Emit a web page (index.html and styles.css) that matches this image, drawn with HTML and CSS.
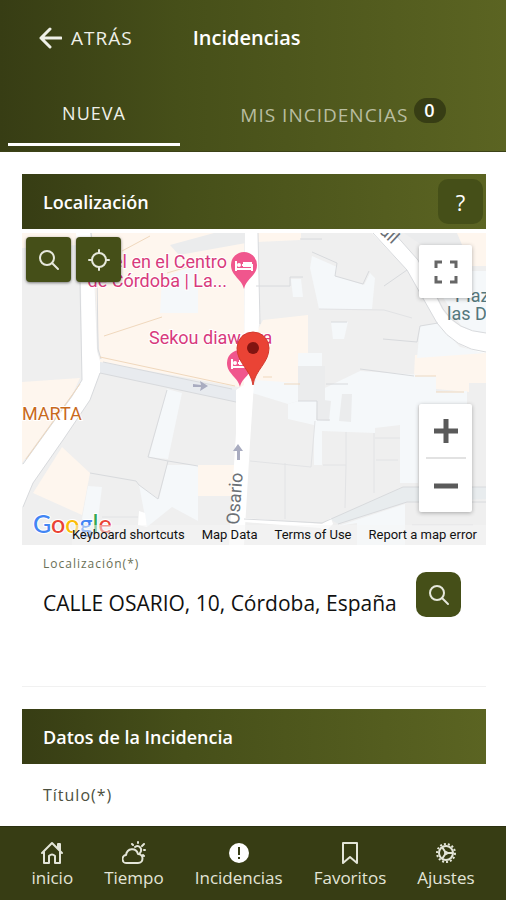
FILE: index.html
```html
<!DOCTYPE html>
<html lang="es">
<head>
    <meta charset="UTF-8">
    <meta name="viewport" content="width=device-width, initial-scale=1.0">
    <title>Incidencias</title>
    <link rel="stylesheet" href="styles.css">
</head>
<body>
    <header class="header">
        <div class="toolbar">
            <button class="back" type="button">
                <svg width="24" height="24" viewBox="0 0 24 24" fill="none" stroke="currentColor" stroke-width="3" stroke-linecap="round" stroke-linejoin="round"><path d="M12 3L3 12l9 9M3 12H23"/></svg>
                ATRÁS
            </button>
            <h1 class="title">Incidencias</h1>
        </div>
        <nav class="tabs">
            <button class="tab active" type="button">NUEVA</button>
            <button class="tab" type="button"><span class="tab-label">MIS INCIDENCIAS</span><span class="badge">0</span></button>
        </nav>
    </header>

    <main class="content">
        <section>
            <div class="section-head">
                <h2>Localización</h2>
                <button class="help" type="button">?</button>
            </div>

            <div class="map">
                <svg class="map-canvas" viewBox="0 0 464 312" preserveAspectRatio="xMidYMid slice">
                    <rect width="464" height="312" fill="#efefef"/>
                    <!-- manzanas -->
                    <g fill="#fef6ee">
                        <path d="M70 0H222V155L78 129Z"/>
                        <path d="M0 149L58 145 50 162 0 230Z"/>
                        <path d="M40 214L68 240 60 282 11 260Z"/>
                        <path d="M0 0H56V12L0 15Z"/>
                        <path d="M241 87L286 82V125L276 168 234 160V100Z"/>
                        <path d="M235 0H279V7L235 9Z"/>
                        <path d="M176 232H212V263H176Z"/>
                        <path d="M434 0H464V33H450Z"/>
                        <path d="M393 122L464 118V150H447V159L414 156 392 143Z"/>
                    </g>
                    <g fill="#f5f8fa">
                        <path d="M290 23L315 34 313 43 342 52 348 40 353 45 350 76H297L288 35Z"/>
                        <path d="M269 46H279L281 64H271Z"/>
                        <path d="M140 45L176 31V80H138Z"/>
                        <path d="M145 156L160 160 146 226 127 224Z"/>
                        <path d="M145 232H176V288L150 274 125 294 117 252 137 266Z"/>
                        <path d="M66 253L80 254 76 286H60Z"/>
                        <path d="M309 89H326L322 106H311Z"/>
                        <path d="M276 120H300V133H276Z"/>
                        <path d="M234 147L276 150V168L266 171 230 160Z"/>
                        <path d="M266 171L276 168 338 138 414 143V159L445 158V172H396V250H378V192L353 195V200L300 198V232H292V192L266 186Z"/>
                        <path d="M423 38H464V104L440 94 415 55Z"/>
                        <path d="M398 93L416 90 438 114 464 120 395 125Z"/>
                        <path d="M316 293L383 271V312H335V290Z"/>
                    </g>
                    <g fill="#ebeced">
                        <path d="M148 12L192 0H224V10L157 22Z"/>
                        <path d="M276 133H303V168H276Z"/>
                        <path d="M295 166L309 168 307 188 294 187Z"/>
                        <path d="M320 161H330L329 189 317 188Z"/>
                        <path d="M382 0H435L440 12H400Z"/>
                    </g>
                    <!-- calles -->
                    <path d="M78 129L214 157V169L78 140Z" fill="#e8ebef"/>
                    <path d="M316 291L308 286 381 254H464V266L385 269Z" fill="#e8ecee"/>
                    <g fill="#ffffff">
                        <path d="M54 0H68L72 40 75 118 78 128V140L68 167 41 207 11 250 1 274H0V232L50 164 60 147 59 50Z"/>
                        <path d="M223 0H236L238 80 233 135 231 165 228 210 222 312H207L214 200V157L222 152Z"/>
                        <path d="M350 0H372L396 27 420 76Q434 98 464 100V120Q433 116 415 90L385 37Z"/>
                        <path d="M222 285L300 291 309 285 311 291 303 299 298 295 222 289Z"/>
                        <path d="M117 278L123 280 125 294 116 292Z"/>
                    </g>
                    <g fill="none" stroke="#d8dadd" stroke-width="1">
                        <path d="M58 50L60 147 50 163 1 231M78 140L68 167 41 207 11 250 1 274"/>
                        <path d="M69 0L75 40 76 116 79 126M78 140L214 169M81 129L210 156"/>
                        <path d="M145 157L126 224 146 228 136 266 117 252 114 248 68 240M146 228L176 233"/>
                        <path d="M236 0L238 91M222 286L300 290 381 254H464M316 291L385 269H464"/>
                        <path d="M351 0L385 37 415 90Q433 116 464 119M372 0L396 27 421 76Q435 98 464 100"/>
                        <path d="M385 37L362 53M290 19L315 30 313 43 341 51 347 38"/>
                        <path d="M234 53H268V44H281M361 106L395 109 398 93 416 90"/>
                        <path d="M276 168H295V187H308M304 151H326M338 136L392 143M278 6H300M309 89H325"/>
                    </g>
                    <g fill="none" stroke="#e2e3e5" stroke-width="1">
                        <path d="M228 228L289 234 293 188M301 232H324V199M324 232L323 275M263 230V286M352 200V260"/>
                        <path d="M353 205H378M354 227H376M80 284H116M390 292H451M401 173V252M297 76L362 77 390 85"/>
                    </g>
                    <g fill="none" stroke="#f0d8bd" stroke-width="1">
                        <path d="M82 103L140 84M100 18L128 3M145 40L165 34M78 124L213 153M58 151L4 226M241 144H250M262 151H278M414 159H442M393 143H414"/>
                    </g>
                    <!-- sentido de circulación -->
                    <g fill="#a9acc0">
                        <path d="M171 151L179 152 178 148 186 153 178 158 179 154 171 154Z"/>
                        <path d="M215 227V218H211L216 211 221 218H218V227Z"/>
                    </g>
                    <g class="poi">
                        <text x="205" y="35" text-anchor="end">Hotel en el Centro</text>
                        <text x="205" y="54" text-anchor="end">de Córdoba | La...</text>
                        <text x="127" y="111">Sekou diawarra</text>
                    </g>
                    <text class="shop" x="0" y="187">MARTA</text>
                    <text class="street" transform="translate(217 292) rotate(-86)">Osario</text>
                    <text class="street" transform="translate(348 -9) rotate(43)">Call</text>
                    <text class="square" x="433" y="69">Plaza</text>
                    <text class="square" x="425" y="87">las Doblas</text>
                    <!-- alojamientos -->
                    <g id="bed">
                        <path d="M222 56C220 46 209 43 209 32A13 13 0 0 1 235 32C235 43 224 46 222 56Z" fill="#f0568d"/>
                        <path d="M214 28V38M214 36H230M230 38V32H220" fill="none" stroke="#fff" stroke-width="2"/>
                        <path d="M221 29H230V34H221Z" fill="#fff"/>
                        <circle cx="217" cy="32" r="2" fill="#fff"/>
                    </g>
                    <use href="#bed" x="-4" y="98"/>
                    <!-- marcador -->
                    <path d="M231 152C229 137 215 130 215 115A16 16 0 0 1 247 115C247 130 233 137 231 152Z" fill="#ea4335" stroke="#d33b2f" stroke-width="1"/>
                    <circle cx="231" cy="115" r="6" fill="#811411"/>
                    <text class="google" x="11" y="300"><tspan fill="#4285f4">G</tspan><tspan fill="#ea4335">o</tspan><tspan fill="#fbbc05">o</tspan><tspan fill="#4285f4">g</tspan><tspan fill="#34a853">l</tspan><tspan fill="#ea4335">e</tspan></text>
                </svg>
                <div class="map-tools">
                    <button class="icon-btn" type="button" aria-label="Buscar">
                        <svg width="24" height="24" viewBox="0 0 24 24" fill="none" stroke="currentColor" stroke-width="2" stroke-linecap="round"><circle cx="10" cy="10" r="7"/><path d="M15 15l6 6"/></svg>
                    </button>
                    <button class="icon-btn" type="button" aria-label="Mi ubicación">
                        <svg width="24" height="24" viewBox="0 0 24 24" fill="none" stroke="currentColor" stroke-width="2" stroke-linecap="round"><circle cx="12" cy="12" r="7"/><path d="M12 2v3M12 19v3M2 12h3M19 12h3"/></svg>
                    </button>
                </div>
                <button class="map-btn fullscreen" type="button" aria-label="Pantalla completa">
                    <svg width="24" height="24" viewBox="0 0 24 24" fill="none" stroke="#666" stroke-width="3"><path d="M2 8V2h6M16 2h6v6M22 16v6h-6M8 22H2v-6"/></svg>
                </button>
                <div class="zoom">
                    <button class="map-btn" type="button" aria-label="Acercar">
                        <svg width="24" height="24" viewBox="0 0 24 24" stroke="#5a5a5a" stroke-width="5"><path d="M0 12h24M12 0v24"/></svg>
                    </button>
                    <button class="map-btn" type="button" aria-label="Alejar">
                        <svg width="24" height="24" viewBox="0 0 24 24" stroke="#5a5a5a" stroke-width="5"><path d="M0 12h24"/></svg>
                    </button>
                </div>
                <div class="map-legal">
                    <a href="#">Keyboard shortcuts</a>
                    <a href="#">Map Data</a>
                    <a href="#">Terms of Use</a>
                    <a href="#">Report a map error</a>
                </div>
            </div>

            <div class="location">
                <div class="field">
                    <label for="location">Localización(*)</label>
                    <input type="text" id="location" value="CALLE OSARIO, 10, Córdoba, España">
                </div>
                <button class="icon-btn rounded" type="button" aria-label="Buscar dirección">
                    <svg width="24" height="24" viewBox="0 0 24 24" fill="none" stroke="currentColor" stroke-width="2" stroke-linecap="round"><circle cx="10" cy="10" r="7"/><path d="M15 15l6 6"/></svg>
                </button>
            </div>
        </section>

        <section>
            <div class="section-head">
                <h2>Datos de la Incidencia</h2>
            </div>
            <div class="row">
                <label for="subject">Título(*)</label>
                <input type="text" id="subject">
            </div>
        </section>
    </main>

    <nav class="bottom-nav">
        <a href="#">
            <svg width="24" height="24" viewBox="0 0 24 24" fill="none" stroke="currentColor" stroke-width="2" stroke-linecap="round" stroke-linejoin="round"><path d="M2 12L12 2l10 10"/><path d="M18 7V3h2v6z" fill="currentColor"/><path d="M4 11v11h5v-7q3-3 6 0v7h5V11"/></svg>
            <span>inicio</span>
        </a>
        <a href="#">
            <svg width="24" height="24" viewBox="0 0 24 24" fill="none" stroke="currentColor" stroke-width="2" stroke-linecap="round" stroke-linejoin="round"><path d="M5 22a4 4 0 0 1-1-8c1-7 10-8 12-1 6 0 6 9 0 9zM13 6c4-3 8 2 5 6M16 1v1M10 3l1 1M22 3l-2 2M22 9h1M21 14l1 1"/></svg>
            <span>Tiempo</span>
        </a>
        <a href="#">
            <svg width="24" height="24" viewBox="0 0 24 24"><circle cx="12" cy="12" r="10" fill="#fff"/><path d="M12 6v8M12 16v2" stroke="#373d14" stroke-width="2"/></svg>
            <span>Incidencias</span>
        </a>
        <a href="#">
            <svg width="24" height="24" viewBox="0 0 24 24" fill="none" stroke="currentColor" stroke-width="2" stroke-linejoin="round"><path d="M5 2h14v20l-7-6-7 6z"/></svg>
            <span>Favoritos</span>
        </a>
        <a href="#">
            <svg width="24" height="24" viewBox="0 0 24 24" fill="none" stroke="currentColor" stroke-width="2"><circle cx="12" cy="12" r="7"/><circle cx="12" cy="12" r="9" stroke-dasharray="2 2"/><circle cx="12" cy="12" r="2" fill="currentColor" stroke="none"/><path d="M12 12h7M12 12L8 6M12 12l-4 6"/></svg>
            <span>Ajustes</span>
        </a>
    </nav>
</body>
</html>
```

FILE: styles.css
```css
* {
    box-sizing: border-box;
}
body {
    margin: 0;
    height: 100vh;
    display: flex;
    flex-direction: column;
    font-family: "Open Sans", "Noto Sans", sans-serif;
    background: #fff;
    color: #111;
}
button, input {
    font: inherit;
    color: inherit;
    border: none;
    background: none;
    padding: 0;
    margin: 0;
}
button {
    cursor: pointer;
}
svg {
    display: block;
}
h1, h2 {
    margin: 0;
    font-weight: 600;
}
.header, .section-head {
    background: linear-gradient(to right, #373d14, #464f19 35%, #5b6422);
    color: #fff;
}
.header {
    flex: none;
    border-bottom: 1px solid #3c4217;
}
.toolbar {
    display: flex;
    align-items: center;
    height: 75px;
    padding: 0 38px;
    gap: 60px;
}
.back {
    display: flex;
    align-items: center;
    gap: 9px;
    font-size: 19px;
    letter-spacing: 1px;
    color: #eff0e8;
}
.title {
    font-size: 20px;
}
.tabs {
    display: flex;
    height: 76px;
    padding: 0 0 5px 8px;
}
.tab {
    flex: 1 1 auto;
    display: flex;
    align-items: center;
    justify-content: center;
    gap: 6px;
    padding-top: 8px;
    font-size: 18px;
    letter-spacing: 1px;
    color: #b9bda0;
}
.tab.active {
    flex: 0 0 172px;
    color: #eff0e8;
    border-bottom: 3px solid #fff;
}
.tab-label {
    font-size: 19px;
}
.badge {
    align-self: flex-start;
    margin-top: 15px;
    padding: 0 10px;
    border-radius: 13px;
    background: #373d14;
    color: #fff;
    font-weight: 600;
    line-height: 25px;
}
.content {
    flex: 1;
    min-height: 0;
    padding: 22px 20px 0 22px;
    overflow: hidden;
}
.section-head {
    display: flex;
    align-items: center;
    justify-content: space-between;
    height: 55px;
    padding: 0 3px 0 21px;
}
.section-head h2 {
    font-size: 18px;
}
.help {
    width: 45px;
    height: 45px;
    border-radius: 10px;
    background: #454f18;
    font-size: 22px;
}
.map {
    position: relative;
    margin-top: 4px;
    overflow: hidden;
    font-family: Roboto, "Liberation Sans", sans-serif;
}
.map-canvas {
    width: 100%;
    height: 312px;
}
.poi {
    font-size: 18px;
    fill: #d83a7c;
    stroke: #fff;
    stroke-width: 2px;
    paint-order: stroke;
}
.shop {
    font-size: 18px;
    fill: #c96a1c;
    stroke: #fff;
    stroke-width: 2px;
    paint-order: stroke;
}
.street {
    font-size: 18px;
    fill: #6b7075;
}
.square {
    font-size: 18px;
    fill: #54777c;
}
.google {
    font-family: Lato, sans-serif;
    font-size: 25px;
    font-weight: 500;
    stroke: #fff;
    stroke-width: 2px;
    paint-order: stroke;
}
.map-tools {
    position: absolute;
    top: 4px;
    left: 4px;
    display: flex;
    gap: 5px;
}
.icon-btn {
    display: flex;
    align-items: center;
    justify-content: center;
    flex: none;
    width: 45px;
    height: 45px;
    border-radius: 4px;
    background: #454f18;
    color: #e6e8dc;
    box-shadow: 0 1px 3px rgba(0, 0, 0, 0.5);
}
.icon-btn.rounded {
    border-radius: 10px;
    box-shadow: none;
}
.map-btn {
    display: flex;
    align-items: center;
    justify-content: center;
    width: 53px;
    height: 53px;
    background: #fff;
}
.fullscreen, .zoom {
    position: absolute;
    right: 14px;
    border-radius: 2px;
    box-shadow: 0 1px 4px rgba(0, 0, 0, 0.3);
}
.fullscreen {
    top: 12px;
}
.zoom {
    bottom: 33px;
    background: linear-gradient(#e2e2e2, #e2e2e2) center / 40px 2px no-repeat #fff;
    display: flex;
    flex-direction: column;
    gap: 2px;
}
.zoom .map-btn {
    background: none;
}
.map-legal {
    position: absolute;
    right: 0;
    bottom: 0;
    display: flex;
    gap: 17px;
    padding-right: 9px;
    background: rgba(245, 245, 245, 0.5);
    font-size: 13px;
    line-height: 20px;
    white-space: nowrap;
}
.map-legal a {
    color: #111;
    text-decoration: none;
}
.location {
    display: flex;
    align-items: flex-start;
    justify-content: space-between;
    height: 142px;
    margin-bottom: 22px;
    padding: 10px 25px 0 21px;
    border-bottom: 1px solid #f1f1f1;
}
.location .icon-btn {
    margin-top: 17px;
}
.field {
    flex: 1;
    display: flex;
    flex-direction: column;
    gap: 12px;
}
.field label {
    font-size: 12px;
    line-height: 18px;
    letter-spacing: 1px;
    color: #6a6f55;
}
.field input {
    width: 100%;
    height: 36px;
    font-size: 21px;
}
.row {
    display: flex;
    align-items: center;
    height: 62px;
    padding: 0 21px;
}
.row label {
    font-size: 16px;
    letter-spacing: 1px;
    color: #4c5040;
}
.row input {
    flex: 1;
}
.bottom-nav {
    flex: none;
    display: flex;
    justify-content: center;
    gap: 31px;
    height: 74px;
    padding-top: 14px;
    background: #373d14;
    border-top: 1px solid #2b3010;
}
.bottom-nav a {
    display: flex;
    flex-direction: column;
    align-items: center;
    color: #e3e5d8;
    font-size: 17px;
    line-height: 25px;
    text-decoration: none;
}
```
